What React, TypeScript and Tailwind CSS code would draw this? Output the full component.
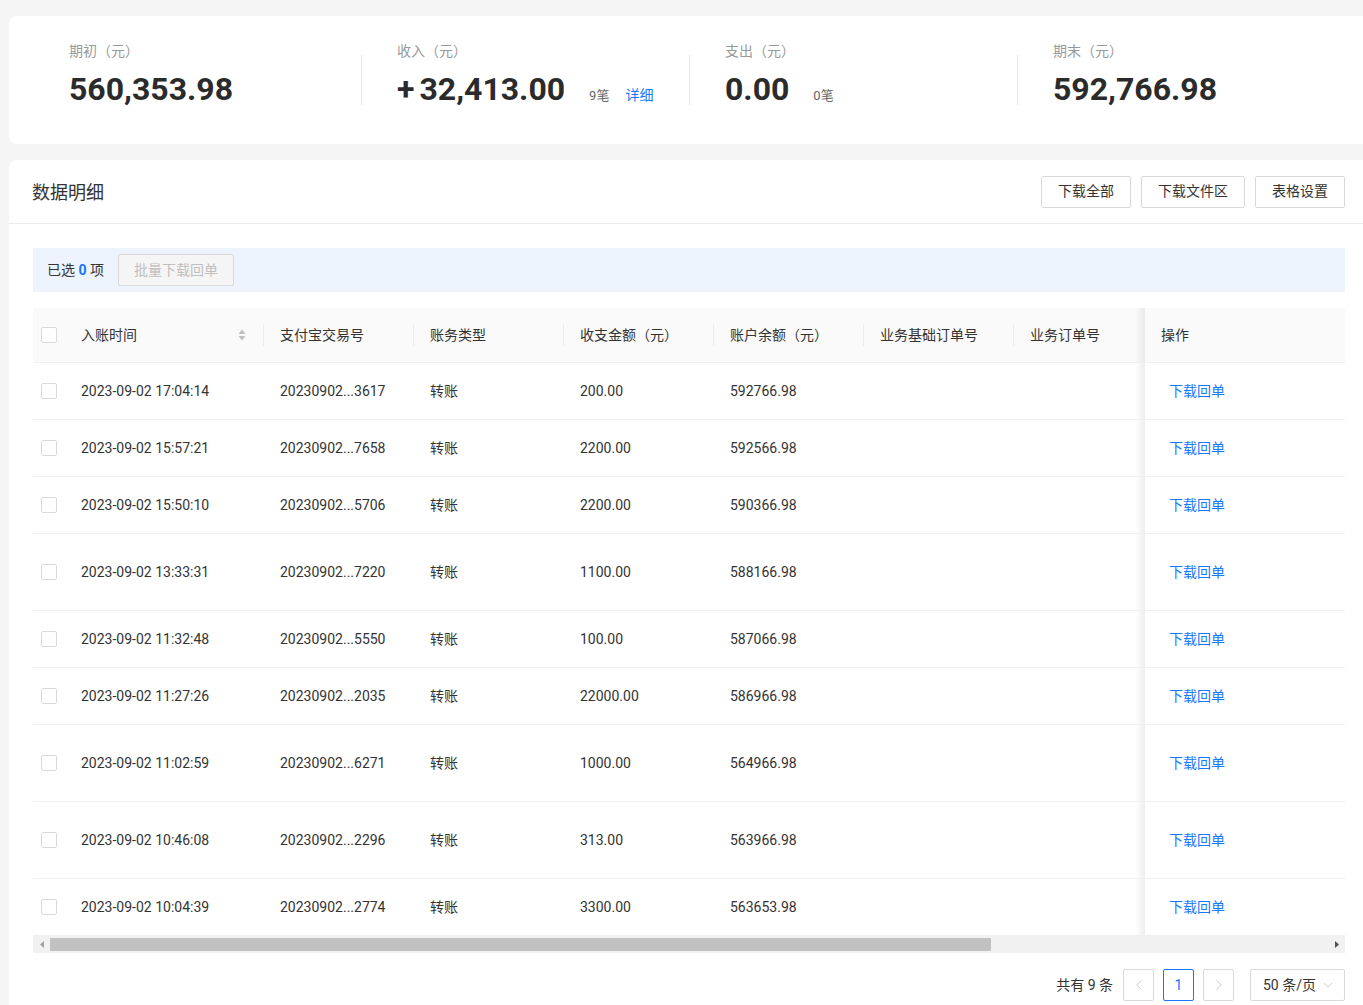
import React from 'react';
import { ChevronDown, ChevronLeft, ChevronRight } from 'lucide-react';

interface Stat {
  label: string;
  value: string;
  count?: string;
  detail?: boolean;
}

const stats: Stat[] = [
  { label: '期初（元）', value: '560,353.98' },
  { label: '收入（元）', value: '+32,413.00', count: '9笔', detail: true },
  { label: '支出（元）', value: '0.00', count: '0笔' },
  { label: '期末（元）', value: '592,766.98' },
];

const rows = [
  { time: '2023-09-02 17:04:14', no: '20230902...3617', amount: '200.00', balance: '592766.98', h: 'h-[57px]' },
  { time: '2023-09-02 15:57:21', no: '20230902...7658', amount: '2200.00', balance: '592566.98', h: 'h-[57px]' },
  { time: '2023-09-02 15:50:10', no: '20230902...5706', amount: '2200.00', balance: '590366.98', h: 'h-[57px]' },
  { time: '2023-09-02 13:33:31', no: '20230902...7220', amount: '1100.00', balance: '588166.98', h: 'h-[77px]' },
  { time: '2023-09-02 11:32:48', no: '20230902...5550', amount: '100.00', balance: '587066.98', h: 'h-[57px]' },
  { time: '2023-09-02 11:27:26', no: '20230902...2035', amount: '22000.00', balance: '586966.98', h: 'h-[57px]' },
  { time: '2023-09-02 11:02:59', no: '20230902...6271', amount: '1000.00', balance: '564966.98', h: 'h-[77px]' },
  { time: '2023-09-02 10:46:08', no: '20230902...2296', amount: '313.00', balance: '563966.98', h: 'h-[77px]' },
  { time: '2023-09-02 10:04:39', no: '20230902...2774', amount: '3300.00', balance: '563653.98', h: 'h-[57px]' },
];

const Checkbox = () => (
  <span className="block h-4 w-4 rounded-[2px] border border-[#d9d9d9] bg-white" />
);

const Sep = () => <span className="h-[22px] w-px bg-[#ececec]" />;

// shadow cast by the fixed "操作" column onto the scrolling part
const FixShadow = () => <span className="h-full w-[10px] bg-linear-to-l from-black/[0.07] to-transparent" />;

const SortIcon = () => (
  <svg width="8" height="12" viewBox="0 0 8 12" className="mr-[17px]">
    <path d="M4 0.5 L7.5 5 H0.5 Z" fill="#bfbfbf" />
    <path d="M0.5 7 H7.5 L4 11.5 Z" fill="#bfbfbf" />
  </svg>
);

const headCols = ['支付宝交易号', '账务类型', '收支金额（元）', '账户余额（元）', '业务基础订单号'];

const App: React.FC = () => {
  return (
    <div className="h-screen w-full overflow-hidden bg-[#f5f5f5] font-['Roboto','Noto_Sans_CJK_SC',sans-serif] text-[#333]">
      <div className="pl-[9px] pt-4">
        {/* summary */}
        <div className="flex h-[128px] w-[1360px] rounded-lg bg-white pl-6 pt-6">
          {stats.map((s, i) => (
            <div key={s.label} className="flex w-[328px] items-start">
              <span className={`mt-[15px] h-[50px] w-px ${i === 0 ? 'bg-transparent' : 'bg-[#e3e3e3]'}`} />
              <div className="pl-[35px]">
                <div className="text-[14px] leading-[22px] text-[#999]">{s.label}</div>
                <div className="mt-[6px] flex items-baseline">
                  <span className="text-[32px] font-bold leading-[42px] text-[#2b2b2b]">
                    {s.value.startsWith('+') ? (
                      <>
                        <span className="mr-[5px]">+</span>
                        {s.value.slice(1)}
                      </>
                    ) : (
                      s.value
                    )}
                  </span>
                  {s.count && <span className="ml-6 text-[13px] text-[#666]">{s.count}</span>}
                  {s.detail && <span className="ml-4 text-[14px] text-[#1677ff]">详细</span>}
                </div>
              </div>
            </div>
          ))}
        </div>

        {/* detail card */}
        <div className="mt-4 w-[1360px] rounded-lg bg-white pb-10">
          <div className="flex h-16 items-center justify-between border-b border-[#ebebeb] pl-[23px] pr-6">
            <h2 className="pt-px text-[18px] font-normal text-[#333]">数据明细</h2>
            <div className="flex gap-[10px]">
              {['下载全部', '下载文件区', '表格设置'].map((b) => (
                <button key={b} className="h-8 rounded-[2px] border border-[#d9d9d9] bg-white px-4 text-[14px] text-[#333]">
                  {b}
                </button>
              ))}
            </div>
          </div>

          <div className="px-6 pt-6">
            <div className="flex h-11 items-center gap-[14px] bg-[#edf4fe] pl-[14px] text-[14px]">
              <span>
                已选 <span className="font-bold text-[#1677ff]">0</span> 项
              </span>
              <button className="h-8 rounded-[2px] border border-[#d9d9d9] bg-[#f5f5f5] px-[15px] text-[14px] text-[#bfbfbf]">
                批量下载回单
              </button>
            </div>

            {/* table */}
            <div className="mt-4 text-[14px]">
              <div className="flex h-[55px] border-b border-[#f0f0f0] bg-[#fafafa]">
                <div className="flex w-8 items-center pl-2">
                  <Checkbox />
                </div>
                <div className="flex w-[199px] items-center justify-between pl-4">
                  <span>入账时间</span>
                  <span className="flex items-center">
                    <SortIcon />
                    <Sep />
                  </span>
                </div>
                {headCols.map((c) => (
                  <div key={c} className="flex w-[150px] items-center justify-between pl-4">
                    <span>{c}</span>
                    <Sep />
                  </div>
                ))}
                <div className="flex w-[131px] items-center justify-between pl-4">
                  <span>业务订单号</span>
                  <FixShadow />
                </div>
                <div className="flex w-[200px] items-center bg-[#fafafa] pl-4">操作</div>
              </div>

              {rows.map((r) => (
                <div key={r.time} className={`flex border-b border-[#f0f0f0] ${r.h}`}>
                  <div className="flex w-8 items-center pl-2">
                    <Checkbox />
                  </div>
                  <div className="flex w-[199px] items-center pl-4">{r.time}</div>
                  <div className="flex w-[150px] items-center pl-4">{r.no}</div>
                  <div className="flex w-[150px] items-center pl-4">转账</div>
                  <div className="flex w-[150px] items-center pl-4">{r.amount}</div>
                  <div className="flex w-[150px] items-center pl-4">{r.balance}</div>
                  <div className="w-[150px]" />
                  <div className="flex w-[131px] justify-end">
                    <FixShadow />
                  </div>
                  <div className="flex w-[200px] items-center bg-white pl-6">
                    <span className="text-[#1677ff]">下载回单</span>
                  </div>
                </div>
              ))}

              {/* horizontal scrollbar */}
              <div className="flex h-[17px] items-center bg-[#f1f1f1]">
                <div className="flex w-[17px] items-center justify-center">
                  <svg width="4" height="7" viewBox="0 0 4 7">
                    <path d="M4 0 V7 L0 3.5 Z" fill="#a3a3a3" />
                  </svg>
                </div>
                <div className="h-[13px] w-[941px] bg-[#c1c1c1]" />
                <div className="flex-1" />
                <div className="flex w-[17px] items-center justify-center">
                  <svg width="4" height="7" viewBox="0 0 4 7">
                    <path d="M0 0 V7 L4 3.5 Z" fill="#505050" />
                  </svg>
                </div>
              </div>
            </div>

            {/* pagination */}
            <div className="mt-4 flex items-center justify-end text-[14px]">
              <span className="mr-[10px]">共有 9 条</span>
              <span className="flex h-8 w-[31px] items-center justify-center rounded-[2px] border border-[#d9d9d9] text-[#c4c4c4]">
                <ChevronLeft size={18} strokeWidth={1.2} />
              </span>
              <span className="ml-[9px] flex h-8 w-[31px] items-center justify-center rounded-[2px] border border-[#1677ff] text-[#1677ff]">
                1
              </span>
              <span className="ml-[9px] flex h-8 w-[31px] items-center justify-center rounded-[2px] border border-[#d9d9d9] text-[#c4c4c4]">
                <ChevronRight size={18} strokeWidth={1.2} />
              </span>
              <span className="ml-4 flex h-8 w-[95px] items-center justify-between rounded-[2px] border border-[#d9d9d9] pl-3 pr-2">
                <span>50 条/页</span>
                <ChevronDown size={16} strokeWidth={1.2} className="text-[#c4c4c4]" />
              </span>
            </div>
          </div>
        </div>
      </div>
    </div>
  );
};

export default App;
